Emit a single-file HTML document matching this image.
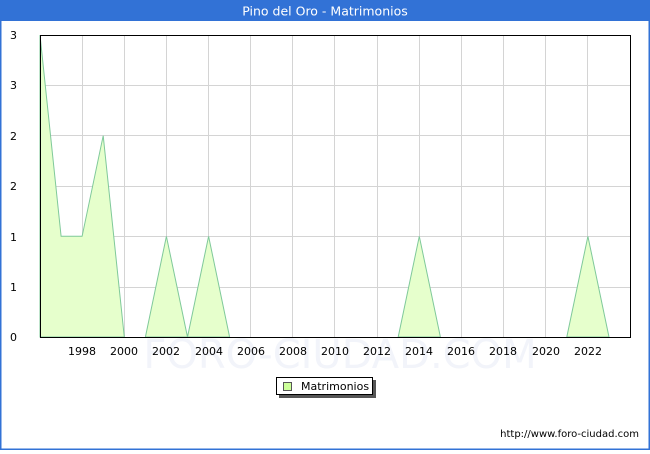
<!DOCTYPE html>
<html><head><style>
body{margin:0;width:650px;height:450px;overflow:hidden;font-family:"DejaVu Sans","Liberation Sans",sans-serif;}
</style></head><body>
<svg width="650" height="450" xmlns="http://www.w3.org/2000/svg" font-family="DejaVu Sans, Liberation Sans, sans-serif">
<rect x="0" y="0" width="650" height="450" fill="#fff"/>
<rect x="0.5" y="0.5" width="649" height="449" fill="none" stroke="#3272d6" stroke-width="2"/>
<rect x="0" y="0" width="650" height="21" fill="#3272d6"/>
<text x="325" y="15.5" fill="#fff" font-size="12.5" text-anchor="middle">Pino del Oro - Matrimonios</text>
<text x="340" y="368" fill="#f2f4fa" font-size="40" text-anchor="middle">FORO-CIUDAD.COM</text>
<g stroke="#d4d4d4" stroke-width="1">
<line x1="40" y1="85.5" x2="630" y2="85.5"/><line x1="40" y1="135.5" x2="630" y2="135.5"/>
<line x1="40" y1="186.5" x2="630" y2="186.5"/><line x1="40" y1="236.5" x2="630" y2="236.5"/>
<line x1="40" y1="287.5" x2="630" y2="287.5"/>
<line x1="82.5" y1="35" x2="82.5" y2="337"/><line x1="124.5" y1="35" x2="124.5" y2="337"/>
<line x1="166.5" y1="35" x2="166.5" y2="337"/><line x1="208.5" y1="35" x2="208.5" y2="337"/>
<line x1="250.5" y1="35" x2="250.5" y2="337"/><line x1="292.5" y1="35" x2="292.5" y2="337"/>
<line x1="334.5" y1="35" x2="334.5" y2="337"/><line x1="377.5" y1="35" x2="377.5" y2="337"/>
<line x1="419.5" y1="35" x2="419.5" y2="337"/><line x1="461.5" y1="35" x2="461.5" y2="337"/>
<line x1="503.5" y1="35" x2="503.5" y2="337"/><line x1="545.5" y1="35" x2="545.5" y2="337"/>
<line x1="587.5" y1="35" x2="587.5" y2="337"/>
</g>
<g fill="#e6ffcc" stroke="#7fc99a" stroke-width="1">
<polygon points="40,35 61.1,236.3 82.1,236.3 103.2,135.7 124.3,337 40,337"/>
<polygon points="145.4,337 166.4,236.3 187.5,337"/>
<polygon points="187.5,337 208.6,236.3 229.6,337"/>
<polygon points="398.2,337 419.3,236.3 440.4,337"/>
<polygon points="566.8,337 587.9,236.3 609,337"/>
</g>
<rect x="40.5" y="35.5" width="590" height="302" fill="none" stroke="#000" stroke-width="1"/>
<g font-size="11" fill="#000" text-anchor="end">
<text x="17" y="39">3</text><text x="17" y="89">3</text><text x="17" y="140">2</text>
<text x="17" y="190">2</text><text x="17" y="241">1</text><text x="17" y="291">1</text><text x="17" y="341">0</text>
</g>
<g font-size="11" fill="#000" text-anchor="middle">
<text x="82" y="355">1998</text><text x="124" y="355">2000</text><text x="166" y="355">2002</text>
<text x="209" y="355">2004</text><text x="251" y="355">2006</text><text x="293" y="355">2008</text>
<text x="335" y="355">2010</text><text x="377" y="355">2012</text><text x="419" y="355">2014</text>
<text x="461" y="355">2016</text><text x="503" y="355">2018</text><text x="546" y="355">2020</text>
<text x="588" y="355">2022</text>
</g>
<rect x="279" y="380" width="97" height="18" fill="#555"/>
<rect x="276.5" y="377.5" width="96" height="17" fill="#fff" stroke="#000"/>
<rect x="283.5" y="382.5" width="8" height="8" fill="#ccff99" stroke="#555"/>
<text x="301" y="390" font-size="11">Matrimonios</text>
<text x="639" y="437" font-size="10" text-anchor="end">http://www.foro-ciudad.com</text>
</svg>
</body></html>
